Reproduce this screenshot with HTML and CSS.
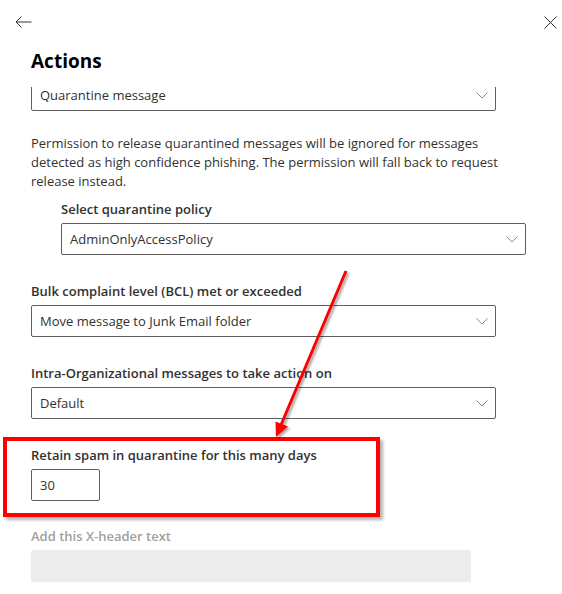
FILE: index.html
```html
<!DOCTYPE html>
<html lang="en">
<head>
<meta charset="utf-8">
<title>Actions</title>
<link rel="stylesheet" href="styles.css">
</head>
<body>
<div class="panel">
  <header class="topbar">
    <button class="icon-btn" aria-label="Back">
      <svg width="17" height="12" viewBox="0 0 17 12"><path d="M16.5 6H1M6.5 0.5L1 6l5.5 5.5" fill="none" stroke="#323130" stroke-width="1"/></svg>
    </button>
    <button class="icon-btn" aria-label="Close">
      <svg width="13" height="13" viewBox="0 0 13 13"><path d="M0.5 0.5l12 12M12.5 0.5l-12 12" fill="none" stroke="#323130" stroke-width="1"/></svg>
    </button>
  </header>
  <h1 class="title">Actions</h1>
  <div class="scroll">
    <div class="content">
      <div class="dropdown dropdown-first">
        <span class="value">Quarantine message</span>
        <svg class="chev" width="12" height="7" viewBox="0 0 12 7"><path d="M0.5 0.5l5.5 5.5 5.5-5.5" fill="none" stroke="#8a8886" stroke-width="1"/></svg>
      </div>
      <p class="note">Permission to release quarantined messages will be ignored for messages<br>detected as high confidence phishing. The permission will fall back to request<br>release instead.</p>
      <div class="nested">
        <div class="field field-first">
          <label class="label">Select quarantine policy</label>
          <div class="dropdown">
            <span class="value">AdminOnlyAccessPolicy</span>
            <svg class="chev" width="12" height="7" viewBox="0 0 12 7"><path d="M0.5 0.5l5.5 5.5 5.5-5.5" fill="none" stroke="#8a8886" stroke-width="1"/></svg>
          </div>
        </div>
      </div>
      <div class="field">
        <label class="label">Bulk complaint level (BCL) met or exceeded</label>
        <div class="dropdown">
          <span class="value">Move message to Junk Email folder</span>
          <svg class="chev" width="12" height="7" viewBox="0 0 12 7"><path d="M0.5 0.5l5.5 5.5 5.5-5.5" fill="none" stroke="#8a8886" stroke-width="1"/></svg>
        </div>
      </div>
      <div class="field">
        <label class="label">Intra-Organizational messages to take action on</label>
        <div class="dropdown">
          <span class="value">Default</span>
          <svg class="chev" width="12" height="7" viewBox="0 0 12 7"><path d="M0.5 0.5l5.5 5.5 5.5-5.5" fill="none" stroke="#8a8886" stroke-width="1"/></svg>
        </div>
      </div>
      <div class="field">
        <label class="label">Retain spam in quarantine for this many days</label>
        <div class="textbox">30</div>
      </div>
      <div class="field field-disabled">
        <label class="label">Add this X-header text</label>
        <div class="textbox textbox-disabled"></div>
      </div>
    </div>
  </div>
  <div class="highlight"></div>
  <svg class="arrow" width="562" height="594" viewBox="0 0 562 594">
    <defs>
      <filter id="sh" x="-20%" y="-20%" width="140%" height="140%">
        <feDropShadow dx="2" dy="2" stdDeviation="1.2" flood-color="#000" flood-opacity="0.35"/>
      </filter>
    </defs>
    <g filter="url(#sh)">
      <line x1="346" y1="271" x2="281" y2="425" stroke="#ff0000" stroke-width="3"/>
      <polygon points="276,437 275.5,421.5 288,426.5" fill="#ff0000"/>
    </g>
  </svg>
</div>
</body>
</html>
```

FILE: styles.css
```css
* {
  box-sizing: border-box;
}

html, body {
  margin: 0;
  padding: 0;
  background: #ffffff;
}

body {
  font-family: "Open Sans", "Noto Sans", sans-serif;
  font-size: 13px;
  color: #323130;
}

.panel {
  position: relative;
  width: 562px;
  height: 594px;
  overflow: hidden;
  background: #ffffff;
}

.topbar {
  display: flex;
  justify-content: space-between;
  align-items: flex-start;
  height: 47px;
  padding: 16px 5px 0 15px;
}

.icon-btn {
  display: block;
  margin: 0;
  padding: 0;
  border: 0;
  background: none;
  line-height: 0;
}

.icon-btn svg {
  display: block;
}

.title {
  margin: 0 0 12px;
  padding-left: 31px;
  font-size: 19px;
  line-height: 28px;
  font-weight: 700;
  color: #000000;
}

.scroll {
  height: 507px;
  overflow: hidden;
}

.content {
  margin-top: -8px;
  padding-left: 31px;
  width: 531px;
}

.dropdown {
  display: flex;
  align-items: center;
  justify-content: space-between;
  width: 465px;
  height: 32px;
  padding: 0 7px 0 8px;
  border: 1px solid #605e5c;
  border-radius: 2px;
  color: #323130;
}

.value {
  line-height: 12px;
}

.chev {
  display: block;
  flex: none;
}

.note {
  margin: 23px 0 8px;
  line-height: 19px;
}

.nested {
  padding-left: 30px;
}

.field {
  margin-top: 26px;
}

.field-first {
  margin-top: 0;
}

.label {
  display: block;
  margin-bottom: 4px;
  font-weight: 600;
  line-height: 20px;
}

.textbox {
  width: 69px;
  height: 32px;
  padding: 0 8px;
  border: 1px solid #605e5c;
  border-radius: 2px;
  line-height: 30px;
}

.field-disabled {
  margin-top: 25px;
}

.field-disabled .label {
  color: #a19f9d;
}

.textbox-disabled {
  width: 440px;
  border: 0;
  background: #ececec;
}

.highlight {
  position: absolute;
  left: 3px;
  top: 437px;
  width: 377px;
  height: 80px;
  border: 4px solid #ff0000;
  box-shadow: 3px 3px 3px rgba(0, 0, 0, 0.3);
  pointer-events: none;
}

.arrow {
  position: absolute;
  left: 0;
  top: 0;
  pointer-events: none;
}
```
